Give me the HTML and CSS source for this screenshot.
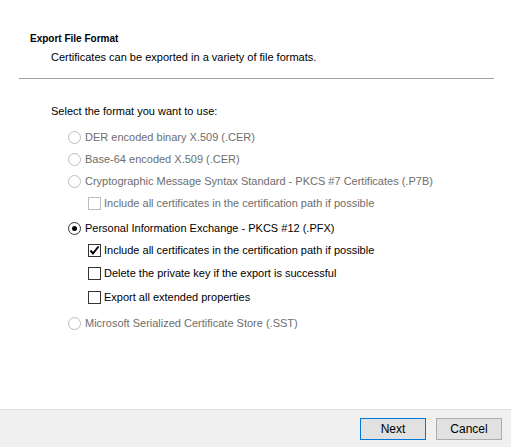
FILE: index.html
```html
<!DOCTYPE html>
<html lang="en">
<head>
    <meta charset="UTF-8">
    <title>Certificate Export Wizard</title>
    <link rel="stylesheet" href="styles.css">
</head>
<body>
    <div class="wizard">
        <header class="wizard-header">
            <h1>Export File Format</h1>
            <p>Certificates can be exported in a variety of file formats.</p>
        </header>
        <main class="wizard-body">
            <p class="prompt">Select the format you want to use:</p>
            <div class="options">
                <label class="option disabled">
                    <span class="radio"></span>DER encoded binary X.509 (.CER)
                </label>
                <label class="option disabled">
                    <span class="radio"></span>Base-64 encoded X.509 (.CER)
                </label>
                <label class="option disabled">
                    <span class="radio"></span>Cryptographic Message Syntax Standard - PKCS #7 Certificates (.P7B)
                </label>
                <div class="sub-options">
                    <label class="option disabled">
                        <span class="check"></span>Include all certificates in the certification path if possible
                    </label>
                </div>
                <label class="option">
                    <span class="radio selected"></span>Personal Information Exchange - PKCS #12 (.PFX)
                </label>
                <div class="sub-options pfx">
                    <label class="option">
                        <span class="check checked">
                            <svg width="11" height="11" viewBox="0 0 11 11"><path d="M1.5 5.5 L4 8.5 L9.5 1.5" fill="none" stroke="#000" stroke-width="2"/></svg>
                        </span>Include all certificates in the certification path if possible
                    </label>
                    <label class="option">
                        <span class="check"></span>Delete the private key if the export is successful
                    </label>
                    <label class="option">
                        <span class="check"></span>Export all extended properties
                    </label>
                </div>
                <label class="option disabled">
                    <span class="radio"></span>Microsoft Serialized Certificate Store (.SST)
                </label>
            </div>
        </main>
        <footer class="wizard-footer">
            <button class="default">Next</button>
            <button>Cancel</button>
        </footer>
    </div>
</body>
</html>
```

FILE: styles.css
```css
body {
    margin: 0;
    font-family: "Liberation Sans", Arial, sans-serif;
    font-size: 11px;
    color: #000;
    background-color: #fff;
}

.wizard {
    height: 447px;
    display: flex;
    flex-direction: column;
}

.wizard-header {
    padding: 33px 17px 0 11px;
    height: 45px;
    border-bottom: 1px solid #a0a0a0;
    margin: 0 17px 0 19px;
}

.wizard-header h1 {
    font-size: 10px;
    font-weight: bold;
    margin: 0 0 7px;
}

.wizard-header p {
    margin: 0 0 0 21px;
}

.wizard-body {
    flex: 1;
    padding: 26px 0 0 51px;
}

.prompt {
    margin: 0 0 9px;
}

.options {
    display: flex;
    flex-direction: column;
    padding-left: 17px;
}

.option {
    display: flex;
    align-items: center;
    height: 22px;
}

.option.disabled {
    color: #6d6d6d;
}

.sub-options {
    display: flex;
    flex-direction: column;
    padding-left: 20px;
    margin-bottom: 3px;
}

/* the PFX group sits a little looser */
.sub-options.pfx {
    margin-bottom: 4px;
}

.sub-options.pfx .option:nth-child(2) {
    margin-top: 1px;
}

.sub-options.pfx .option:nth-child(3) {
    margin-top: 2px;
}

.radio {
    width: 11px;
    height: 11px;
    border: 1px solid #333;
    border-radius: 50%;
    margin-right: 4px;
    position: relative;
    flex-shrink: 0;
}

.disabled .radio {
    border-color: #bcbcbc;
}

.radio.selected::after {
    content: "";
    position: absolute;
    left: 3px;
    top: 3px;
    width: 5px;
    height: 5px;
    border-radius: 50%;
    background-color: #000;
}

.check {
    width: 11px;
    height: 11px;
    border: 1px solid #333;
    margin-right: 3px;
    display: flex;
    align-items: center;
    justify-content: center;
    flex-shrink: 0;
}

.disabled .check {
    border-color: #bcbcbc;
}

.wizard-footer {
    height: 37px;
    background-color: #f0f0f0;
    border-top: 1px solid #dfdfdf;
    display: flex;
    justify-content: flex-end;
    align-items: center;
    gap: 10px;
    padding-right: 9px;
}

button {
    width: 66px;
    height: 22px;
    font-family: inherit;
    font-size: 12px;
    background-color: #e1e1e1;
    border: 1px solid #adadad;
    padding: 0;
}

button.default {
    border-color: #0078d7;
}
```
